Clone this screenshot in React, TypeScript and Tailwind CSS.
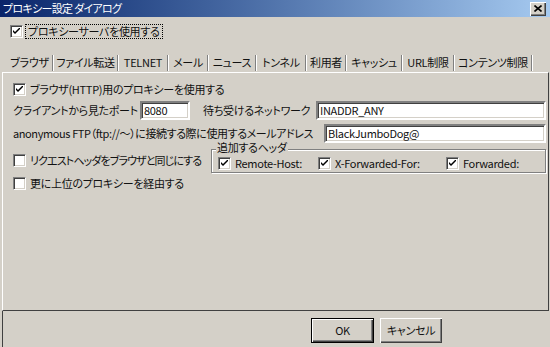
import React from "react";

const font =
  "[font-family:'Noto_Sans_CJK_JP','Liberation_Sans',sans-serif] [font-feature-settings:'palt'] tracking-[-0.3px]";

function CheckBox({ checked }: { checked?: boolean }) {
  return (
    <span className="w-[13px] h-[13px] shrink-0 bg-white border border-t-[#808080] border-l-[#808080] border-b-white border-r-white shadow-[inset_1px_1px_0_#404040,inset_-1px_-1px_0_#d4d0c8] flex items-center justify-center">
      {checked && (
        <svg width="7" height="7" viewBox="0 0 7 7">
          <path d="M0 2 L0 4 L2 6 L7 1 L7 -1 L2 4 Z" fill="#000" />
        </svg>
      )}
    </span>
  );
}

function Check({
  label,
  checked,
  className = "",
  textClass = "",
}: {
  label: string;
  checked?: boolean;
  className?: string;
  textClass?: string;
}) {
  return (
    <label className={"flex items-center gap-[4px] h-[15px] " + className}>
      <CheckBox checked={checked} />
      <span className={"whitespace-nowrap leading-none " + textClass}>{label}</span>
    </label>
  );
}

function Field({ value, className = "" }: { value: string; className?: string }) {
  return (
    <div
      className={
        "h-[19px] bg-white border-2 border-t-[#808080] border-l-[#808080] border-b-white border-r-white shadow-[inset_1px_1px_0_#404040,inset_-1px_-1px_0_#d4d0c8] flex items-center pl-[2px] leading-none " +
        className
      }
    >
      {value}
    </div>
  );
}

const tabs: [string, string][] = [
  ["ブラウザ", "w-[47px]"],
  ["ファイル転送", "w-[65px]"],
  ["TELNET", "w-[50px]"],
  ["メール", "w-[40px]"],
  ["ニュース", "w-[48px]"],
  ["トンネル", "w-[50px]"],
  ["利用者", "w-[40px]"],
  ["キャッシュ", "w-[56px]"],
  ["URL制限", "w-[52px]"],
  ["コンテンツ制限", "w-[78px]"],
];

function Button({ label, main }: { label: string; main?: boolean }) {
  return (
    <button
      className={
        "h-[25px] bg-[#d4d0c8] flex items-center justify-center " +
        (main
          ? "w-[63px] border border-black shadow-[inset_1px_1px_0_#fff,inset_-1px_-1px_0_#404040,inset_-2px_-2px_0_#808080]"
          : "w-[62px] shadow-[inset_1px_1px_0_#fff,inset_-1px_-1px_0_#404040,inset_-2px_-2px_0_#808080]")
      }
    >
      {label}
    </button>
  );
}

export default function App() {
  return (
    <div className={"w-[550px] h-[347px] bg-[#d4d0c8] flex flex-col text-[11px] text-[#111] overflow-hidden " + font}>
      <div className="h-[17px] shrink-0 bg-gradient-to-r from-[#0a246a] to-[#a6caf0] flex items-center justify-between pl-[3px] pr-[4px]">
        <span className="text-white leading-none tracking-[-0.7px]">プロキシー設定 ダイアログ</span>
        <span className="w-[16px] h-[14px] bg-[#d4d0c8] shadow-[inset_1px_1px_0_#fff,inset_-1px_-1px_0_#404040,inset_-2px_-2px_0_#808080] flex items-center justify-center">
          <svg width="8" height="7" viewBox="0 0 8 7">
            <path d="M0.5 0.5 L7.5 6.5 M7.5 0.5 L0.5 6.5" stroke="#000" strokeWidth="1.6" />
          </svg>
        </span>
      </div>

      <div className="pl-[10px] pt-[7px] shrink-0">
        <label className="flex items-center gap-[2px] h-[15px]">
          <CheckBox checked />
          <span className="border border-dotted border-black px-[2px] leading-[13px] whitespace-nowrap">
            プロキシーサーバを使用する
          </span>
        </label>
      </div>

      <div className="mt-[14px] h-[19px] shrink-0 flex pl-[7px]">
        {tabs.map(([t, w]) => (
          <div key={t} className={"flex items-center " + w}>
            <span className="flex-1 text-center whitespace-nowrap leading-none">{t}</span>
            <span className="w-[2px] h-[16px] border-l border-[#808080] bg-white" />
          </div>
        ))}
      </div>

      <div className="h-[239px] shrink-0 ml-[2px] mr-[1px] border border-t-white border-l-white border-r-[#404040] border-b-[#404040] pl-[10px] pr-[2px] pt-[9px] flex flex-col">
        <Check label="ブラウザ(HTTP)用のプロキシーを使用する" checked />

        <div className="mt-[4px] flex items-center">
          <span className="w-[127px] whitespace-nowrap">クライアントから見たポート</span>
          <Field value="8080" className="w-[50px]" />
          <span className="ml-[13px] w-[113px] whitespace-nowrap">待ち受けるネットワーク</span>
          <Field value="INADDR_ANY" className="flex-1" />
        </div>

        <div className="mt-[4px] flex items-center">
          <span className="w-[311px] whitespace-nowrap leading-none tracking-[-0.4px]">
            anonymous FTP（ftp://～）に接続する際に使用するメールアドレス
          </span>
          <Field value="BlackJumboDog@" className="flex-1" />
        </div>

        <div className="mt-[6px] flex items-center">
          <Check
            label="リクエストヘッダをブラウザと同じにする"
            className="w-[198px] -mt-[2px]"
            textClass="tracking-[-0.9px]"
          />
          <div className="relative flex-1 h-[24px] border border-[#808080] shadow-[inset_1px_1px_0_#fff,1px_1px_0_#fff] pl-[6px] pt-[4px] flex items-center">
            <span className="absolute left-[4px] -top-[8px] bg-[#d4d0c8] px-[1px] leading-[10px]">追加するヘッダ</span>
            <Check label="Remote-Host:" checked className="w-[100px]" />
            <Check label="X-Forwarded-For:" checked className="w-[128px]" />
            <Check label="Forwarded:" checked />
          </div>
        </div>

        <Check label="更に上位のプロキシーを経由する" className="mt-[3px]" />
      </div>

      <div className="flex-1 ml-[2px] border-l border-[#404040] flex items-start justify-end gap-[6px] pt-[7px] pr-[108px]">
        <Button label="OK" main />
        <Button label="キャンセル" />
      </div>
    </div>
  );
}
